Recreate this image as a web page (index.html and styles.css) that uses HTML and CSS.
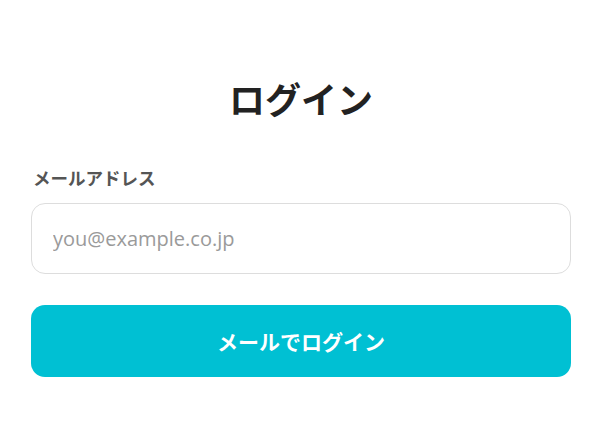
FILE: index.html
```html
<!DOCTYPE html>
<html lang="ja">
<head>
<meta charset="utf-8">
<title>ログイン</title>
<link rel="stylesheet" href="styles.css">
</head>
<body>
<main class="login">
  <h1 class="login-title">ログイン</h1>
  <form class="login-form">
    <label class="field-label" for="email">メールアドレス</label>
    <input class="field-input" id="email" type="email" placeholder="you@example.co.jp">
    <button class="submit-btn" type="button">メールでログイン</button>
  </form>
</main>
</body>
</html>
```

FILE: styles.css
```css
* { box-sizing: border-box; }
html, body { margin: 0; padding: 0; background: #fff; }
body {
  font-family: "Noto Sans CJK JP", "Noto Sans", sans-serif;
  color: #222;
}
.login {
  padding: 72px 38px 0 31px;
  display: flex;
  flex-direction: column;
}
.login-title {
  margin: 0;
  text-align: center;
  font-size: 36px;
  font-weight: 700;
  line-height: 52px;
  color: #222;
}
.login-form {
  display: flex;
  flex-direction: column;
  margin-top: 41px;
}
.field-label {
  font-size: 17.5px;
  font-weight: 700;
  color: #555;
  line-height: 25px;
  padding-left: 2px;
}
.field-input {
  margin-top: 13px;
  height: 71px;
  border: 1px solid #ddd;
  border-radius: 14px;
  padding: 0 21px;
  font-family: "Open Sans", "Noto Sans CJK JP", sans-serif;
  font-size: 20px;
  color: #222;
  outline: none;
}
.field-input::placeholder { color: #9a9a9a; }
.submit-btn {
  margin-top: 31px;
  height: 72px;
  border: 0;
  border-radius: 14px;
  background: #00c0d3;
  color: #fff;
  font-family: "Noto Sans CJK JP", "Noto Sans", sans-serif;
  font-size: 21px;
  font-weight: 700;
  cursor: pointer;
}
```
